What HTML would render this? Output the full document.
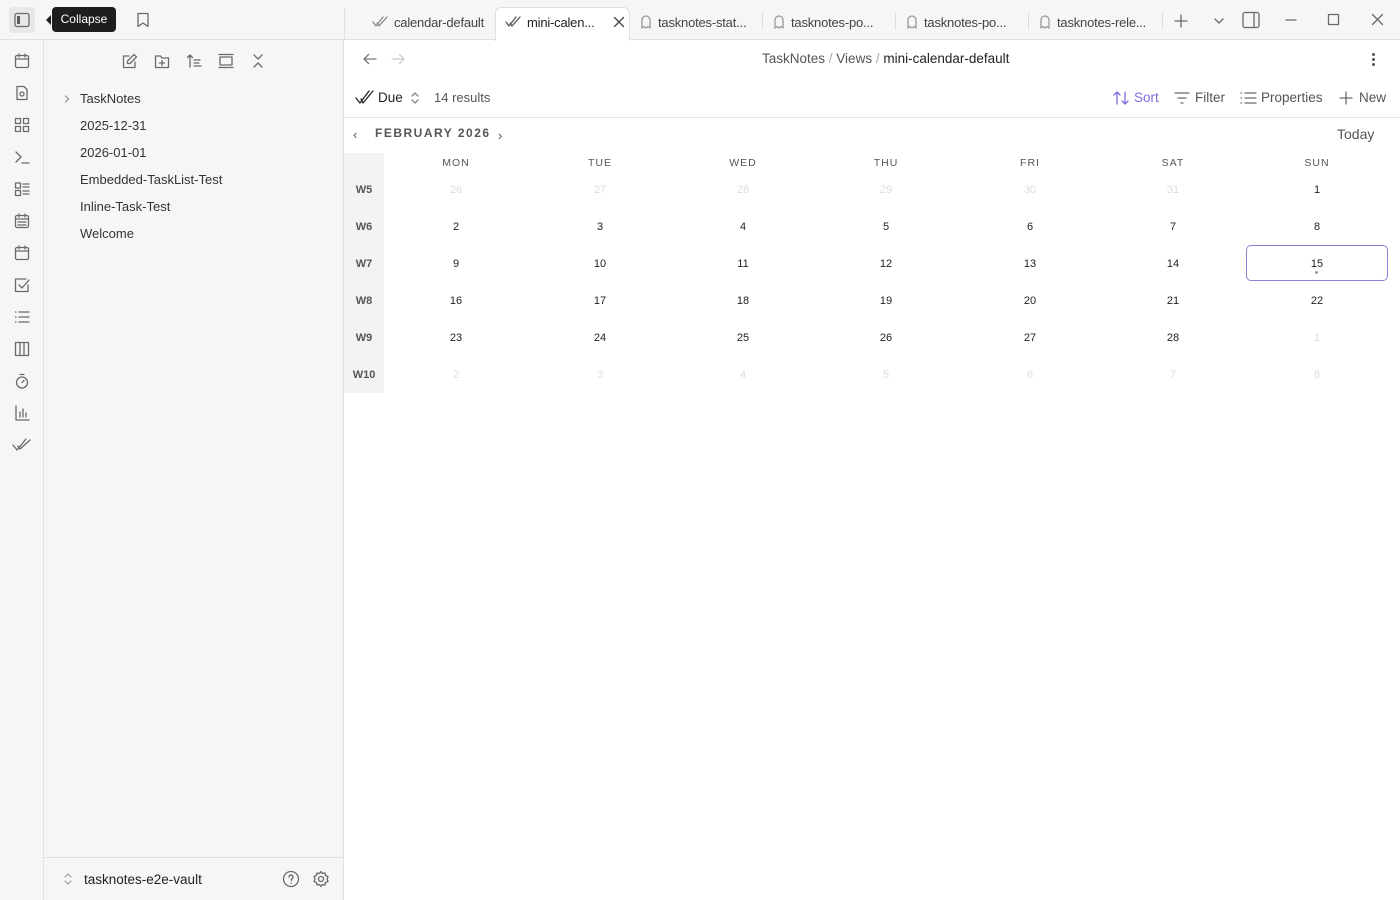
<!DOCTYPE html>
<html><head><meta charset="utf-8"><style>
*{box-sizing:border-box;margin:0;padding:0}
body{width:1400px;height:900px;overflow:hidden;font-family:"Liberation Sans",sans-serif;font-size:13px;color:#222;background:#fff;position:relative}
.abs{position:absolute}
svg{fill:none;stroke:#6a6a6a;stroke-width:1.3;stroke-linecap:round;stroke-linejoin:round}
.side{left:0;top:0;width:344px;height:900px;background:#f6f6f6;border-right:1px solid #e0e0e0}
.ribbon{left:0;top:40px;width:44px;height:860px;border-right:1px solid #e3e3e3}
.topbar{left:0;top:0;width:1400px;height:40px;border-bottom:1px solid #e0e0e0;background:#f6f6f6}
.tab{top:8px;height:28px;font-size:13px;color:#444;display:flex;align-items:center;gap:6px;padding-left:10px;letter-spacing:-0.2px}
.sep{top:12px;width:1px;height:18px;background:#ddd}
.file{left:80px;font-size:13px;color:#333}
.cal{font-size:11px;text-align:center;width:60px;margin-left:-30px}
.dow{color:#555;letter-spacing:1px;font-size:10.5px}
.wk{left:344px;width:40px;text-align:center;font-size:11px;font-weight:bold;color:#555}
.faint{color:#ddd}
</style></head><body>
<div class="abs side"></div>
<div class="abs topbar"></div>
<div class="abs ribbon"></div>
<div class="abs" style="left:344px;top:8px;width:1px;height:32px;background:#e0e0e0"></div>
<div class="abs" style="left:9px;top:7px;width:26px;height:26px;background:#e8e8e8;border-radius:4px"></div>
<svg class="abs" style="left:14px;top:12px" width="16" height="16"><rect x="1" y="1.5" width="14" height="13" rx="2"/><rect x="3" y="4" width="3" height="8" fill="#5c5c5c" stroke="none"/></svg>
<div class="abs" style="left:52px;top:7px;width:64px;height:25px;background:#1e1e1e;border-radius:4px;color:#fff;font-size:12px;line-height:25px;text-align:center">Collapse</div>
<div class="abs" style="left:46px;top:15px;width:0;height:0;border:5px solid transparent;border-right-color:#1e1e1e;border-left:0"></div>
<svg class="abs" style="left:135px;top:12px" width="16" height="16"><path d="M3 1.5h10v13l-5-3.5-5 3.5z"/></svg>
<!-- tabs -->
<div class="abs" style="left:495px;top:7px;width:135px;height:34px;background:#fff;border:1px solid #e0e0e0;border-bottom:none;border-radius:6px 6px 0 0"></div>
<div class="abs tab" style="left:362px"><svg width="16" height="14"><path d="M1 7l3 4 7-9M5 8l2 3 8-9" stroke="#888"/></svg><span>calendar-default</span></div>
<div class="abs tab" style="left:495px;color:#222"><svg width="16" height="14"><path d="M1 7l3 4 7-9M5 8l2 3 8-9" stroke="#555"/></svg><span>mini-calen...</span><svg width="14" height="14" style="margin-left:12px"><path d="M2.5 2.5l9 9M11.5 2.5l-9 9" stroke="#444"/></svg></div>
<div class="abs tab" style="left:630px"><svg width="12" height="14"><path d="M2 13V5a4 4 0 0 1 8 0v8l-2-1.5-2 1.5-2-1.5z" stroke="#999"/></svg><span>tasknotes-stat...</span></div>
<div class="abs sep" style="left:762px"></div>
<div class="abs tab" style="left:763px"><svg width="12" height="14"><path d="M2 13V5a4 4 0 0 1 8 0v8l-2-1.5-2 1.5-2-1.5z" stroke="#999"/></svg><span>tasknotes-po...</span></div>
<div class="abs sep" style="left:895px"></div>
<div class="abs tab" style="left:896px"><svg width="12" height="14"><path d="M2 13V5a4 4 0 0 1 8 0v8l-2-1.5-2 1.5-2-1.5z" stroke="#999"/></svg><span>tasknotes-po...</span></div>
<div class="abs sep" style="left:1028px"></div>
<div class="abs tab" style="left:1029px"><svg width="12" height="14"><path d="M2 13V5a4 4 0 0 1 8 0v8l-2-1.5-2 1.5-2-1.5z" stroke="#999"/></svg><span>tasknotes-rele...</span></div>
<div class="abs sep" style="left:1162px"></div>
<svg class="abs" style="left:1173px;top:13px" width="16" height="16"><path d="M8 2v12M2 8h12"/></svg>
<svg class="abs" style="left:1212px;top:14px" width="14" height="14"><path d="M3 5l4 4 4-4"/></svg>
<svg class="abs" style="left:1242px;top:11px" width="18" height="18"><rect x="1" y="1.5" width="16" height="15" rx="2"/><path d="M12 2v14"/></svg>
<svg class="abs" style="left:1284px;top:13px" width="14" height="14"><path d="M2 7h10"/></svg>
<svg class="abs" style="left:1327px;top:13px" width="14" height="14"><rect x="1.5" y="1.5" width="10" height="10"/></svg>
<svg class="abs" style="left:1371px;top:13px" width="14" height="14"><path d="M1.5 1.5l10 10M11.5 1.5l-10 10"/></svg>
<!-- ribbon icons -->
<svg class="abs" style="left:14px;top:53px" width="16" height="16"><rect x="1.5" y="2.5" width="13" height="12" rx="1.5"/><path d="M1.5 6h13M5 1v3M11 1v3"/></svg>
<svg class="abs" style="left:14px;top:85px" width="16" height="16"><path d="M3 1.5h7l3 3v10H3z"/><circle cx="8" cy="9" r="2"/></svg>
<svg class="abs" style="left:14px;top:117px" width="16" height="16"><rect x="1.5" y="1.5" width="5" height="5"/><rect x="9.5" y="1.5" width="5" height="5"/><rect x="1.5" y="9.5" width="5" height="5"/><rect x="9.5" y="9.5" width="5" height="5"/></svg>
<svg class="abs" style="left:14px;top:149px" width="16" height="16"><path d="M2 3l5 5-5 5M8 14h7"/></svg>
<svg class="abs" style="left:14px;top:181px" width="16" height="16"><rect x="1.5" y="2" width="5" height="5"/><rect x="1.5" y="9.5" width="5" height="5"/><path d="M9 3h6M9 6h6M9 10h6M9 13h6"/></svg>
<svg class="abs" style="left:14px;top:213px" width="16" height="16"><rect x="1.5" y="2.5" width="13" height="12" rx="1.5"/><path d="M1.5 6h13M5 1v3M11 1v3M4 9h8M4 12h8"/></svg>
<svg class="abs" style="left:14px;top:245px" width="16" height="16"><rect x="1.5" y="2.5" width="13" height="12" rx="1.5"/><path d="M1.5 6h13M5 1v3M11 1v3"/></svg>
<svg class="abs" style="left:14px;top:277px" width="16" height="16"><path d="M14 8v6.5H1.5V2H12"/><path d="M5 8l3 3 7-8"/></svg>
<svg class="abs" style="left:14px;top:309px" width="16" height="16"><path d="M5 3h10M5 8h10M5 13h10M1.5 3h.5M1.5 8h.5M1.5 13h.5"/></svg>
<svg class="abs" style="left:14px;top:341px" width="16" height="16"><rect x="1.5" y="1.5" width="13" height="13"/><path d="M6 2v12M10 2v12"/></svg>
<svg class="abs" style="left:14px;top:373px" width="16" height="16"><circle cx="8" cy="9.5" r="5.5"/><path d="M6 1.5h4M8 9.5l2-2"/></svg>
<svg class="abs" style="left:14px;top:405px" width="16" height="16"><path d="M2 1v14h13M6 12V7M9 12V4M12 12V8"/></svg>
<svg class="abs" style="left:12px;top:437px" width="20" height="16"><path d="M1 8l4 5 9-11M6 9l2 3 10-9"/></svg>
<!-- file toolbar -->
<svg class="abs" style="left:122px;top:53px" width="16" height="16"><path d="M13 9v5.5H1.5V3H7"/><path d="M12 1.5l2.5 2.5L8 10.5H5.5V8z"/></svg>
<svg class="abs" style="left:154px;top:53px" width="16" height="16"><path d="M1.5 3h5l1.5 2h6.5v9.5h-13z"/><path d="M8 7.5v5M5.5 10h5"/></svg>
<svg class="abs" style="left:186px;top:53px" width="16" height="16"><path d="M4 14V2M1.5 4.5L4 2l2.5 2.5M8 7h6M8 10h5M8 13h7"/></svg>
<svg class="abs" style="left:218px;top:53px" width="16" height="16"><path d="M1 1.5h14M1 14.5h14"/><rect x="2" y="4" width="12" height="8"/></svg>
<svg class="abs" style="left:250px;top:53px" width="16" height="16"><path d="M4 2l4 4 4-4M4 14l4-4 4 4"/></svg>
<!-- files -->
<svg class="abs" style="left:62px;top:94px" width="10" height="10"><path d="M3.5 2l3 3-3 3" stroke="#999"/></svg>
<div class="abs file" style="top:91px">TaskNotes</div>
<div class="abs file" style="top:118px">2025-12-31</div>
<div class="abs file" style="top:145px">2026-01-01</div>
<div class="abs file" style="top:172px">Embedded-TaskList-Test</div>
<div class="abs file" style="top:199px">Inline-Task-Test</div>
<div class="abs file" style="top:226px">Welcome</div>
<!-- bottom vault -->
<div class="abs" style="left:44px;top:857px;width:299px;height:1px;background:#e0e0e0"></div>
<svg class="abs" style="left:62px;top:872px" width="12" height="14"><path d="M3 5l3-3 3 3M3 9l3 3 3-3" stroke="#aaa"/></svg>
<div class="abs" style="left:84px;top:872px;font-size:13.5px;color:#222">tasknotes-e2e-vault</div>
<svg class="abs" style="left:282px;top:870px" width="18" height="18"><circle cx="9" cy="9" r="7.5"/><path d="M7 7a2 2 0 1 1 2.5 2v1.5M9 13v.2"/></svg>
<svg class="abs" style="left:312px;top:870px" width="18" height="18"><circle cx="9" cy="9" r="2.5"/><path d="M9 1.5l1.5 2 2.5-.5.5 2.5 2.5 1-1 2.5 1 2.5-2.5 1-.5 2.5-2.5-.5L9 16.5l-1.5-2-2.5.5-.5-2.5-2.5-1 1-2.5-1-2.5 2.5-1 .5-2.5 2.5.5z"/></svg>
<!-- main header -->
<svg class="abs" style="left:362px;top:51px" width="16" height="16"><path d="M14 8H2M6.5 3.5L2 8l4.5 4.5" stroke="#777"/></svg>
<svg class="abs" style="left:390px;top:51px" width="16" height="16"><path d="M2 8h12M9.5 3.5L14 8l-4.5 4.5" stroke="#ccc"/></svg>
<div class="abs" style="left:762px;top:51px;font-size:13.5px;color:#555">TaskNotes <span style="color:#aaa">/</span> Views <span style="color:#aaa">/</span> <span style="color:#222">mini-calendar-default</span></div>
<div class="abs" style="left:1372px;top:53px;width:3px;height:3px;border-radius:2px;background:#555"></div>
<div class="abs" style="left:1372px;top:58px;width:3px;height:3px;border-radius:2px;background:#555"></div>
<div class="abs" style="left:1372px;top:63px;width:3px;height:3px;border-radius:2px;background:#555"></div>
<!-- toolbar -->
<svg class="abs" style="left:355px;top:89px" width="20" height="18"><path d="M1 9l4 5 9-12M6 10l2 4 10-12" stroke="#222"/></svg>
<div class="abs" style="left:378px;top:90px;font-size:13.5px">Due</div>
<svg class="abs" style="left:409px;top:91px" width="12" height="14"><path d="M3 5l3-3 3 3M3 9l3 3 3-3" stroke="#888"/></svg>
<div class="abs" style="left:434px;top:90px;font-size:13px;color:#555">14 results</div>
<svg class="abs" style="left:1112px;top:89px" width="18" height="18"><path d="M5 15V3M2 6l3-3 3 3M13 3v12M10 12l3 3 3-3" stroke="#7c6ee0"/></svg>
<div class="abs" style="left:1134px;top:90px;color:#7c6ee0;font-size:13.5px">Sort</div>
<svg class="abs" style="left:1173px;top:89px" width="18" height="18"><path d="M2 4h14M5 9h8M8 14h2"/></svg>
<div class="abs" style="left:1195px;top:90px;color:#555;font-size:13.5px">Filter</div>
<svg class="abs" style="left:1239px;top:89px" width="18" height="18"><path d="M6 4h11M6 9h11M6 14h11M2 4h.5M2 9h.5M2 14h.5"/></svg>
<div class="abs" style="left:1261px;top:90px;color:#555;font-size:13.5px">Properties</div>
<svg class="abs" style="left:1338px;top:89px" width="16" height="18"><path d="M8 3v12M2 9h12"/></svg>
<div class="abs" style="left:1359px;top:90px;color:#555;font-size:13.5px">New</div>
<div class="abs" style="left:344px;top:117px;width:1056px;height:1px;background:#e3e3e3"></div>
<!-- calendar -->
<div class="abs" style="left:353px;top:127px;font-size:13px;color:#555">‹</div>
<div class="abs" style="left:375px;top:126px;font-size:12px;font-weight:bold;letter-spacing:1.5px;color:#555">FEBRUARY 2026</div>
<div class="abs" style="left:498px;top:128px;font-size:13px;color:#555">›</div>
<div class="abs" style="left:1337px;top:126px;font-size:14px;color:#555">Today</div>
<div class="abs" style="left:344px;top:153px;width:40px;height:240px;background:#f3f3f3"></div>
<div class="abs" style="left:1246px;top:245px;width:142px;height:36px;border:1.5px solid #8d80d8;border-radius:5px"></div>
<div class="abs" style="left:1315px;top:271px;width:3px;height:3px;border-radius:2px;background:#999"></div>
<div id="cal"></div>
<script>
var xs=[456,600,743,886,1030,1173,1317],d=["MON","TUE","WED","THU","FRI","SAT","SUN"],h="";
for(var i=0;i<7;i++)h+='<div class="abs cal dow" style="left:'+xs[i]+'px;top:157px">'+d[i]+'</div>';
var rows=[[26,27,28,29,30,31,1],[2,3,4,5,6,7,8],[9,10,11,12,13,14,15],[16,17,18,19,20,21,22],[23,24,25,26,27,28,1],[2,3,4,5,6,7,8]];
for(var r=0;r<6;r++){var y=184+r*37;h+='<div class="abs wk" style="top:'+y+'px">W'+(5+r)+'</div>';
for(var c=0;c<7;c++){var f=(r==0&&c<6)||(r==4&&c==6)||r==5;h+='<div class="abs cal'+(f?' faint':'')+'" style="left:'+xs[c]+'px;top:'+y+'px">'+rows[r][c]+'</div>';}}
document.getElementById('cal').innerHTML=h;
</script>
</body></html>
